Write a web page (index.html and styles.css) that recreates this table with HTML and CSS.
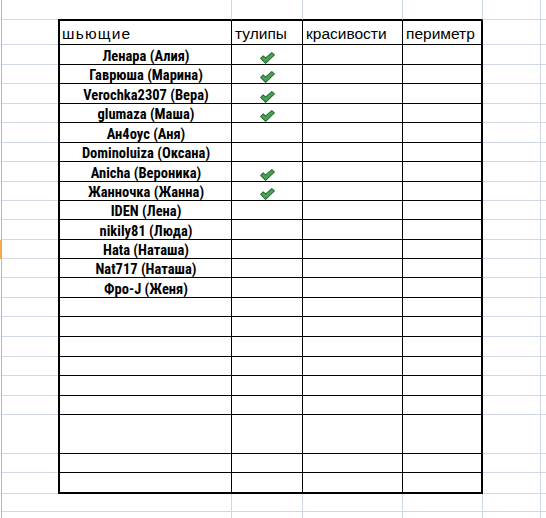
FILE: index.html
```html
<!DOCTYPE html>
<html lang="ru">
<head>
<meta charset="utf-8">
<title>шьющие</title>
<link rel="stylesheet" href="styles.css">
</head>
<body>
<div class="sheet">
  <div class="row r20 top"><div class="g"></div><div class="a"></div><div class="b"></div><div class="c"></div><div class="d"></div><div class="e"></div><div class="f"></div><div class="z"></div></div>
  <div class="row r25 t head"><div class="g"></div><div class="a"></div><div class="b">шьющие</div><div class="c">тулипы</div><div class="d">красивости</div><div class="e">периметр</div><div class="f"></div><div class="z"></div></div>

  <div class="row r20 t"><div class="g"></div><div class="a"></div><div class="b name">Ленара (Алия)</div><div class="c mark"><svg class="check" viewBox="0 0 15 12" width="15" height="12"><polygon points="0.7,6.4 3.2,3.9 5.5,6.2 11.8,0.6 14.4,2.9 5.6,11.4"/></svg></div><div class="d"></div><div class="e"></div><div class="f"></div><div class="z"></div></div>
  <div class="row r19 t"><div class="g"></div><div class="a"></div><div class="b name">Гаврюша (Марина)</div><div class="c mark"><svg class="check" viewBox="0 0 15 12" width="15" height="12"><polygon points="0.7,6.4 3.2,3.9 5.5,6.2 11.8,0.6 14.4,2.9 5.6,11.4"/></svg></div><div class="d"></div><div class="e"></div><div class="f"></div><div class="z"></div></div>
  <div class="row r20 t"><div class="g"></div><div class="a"></div><div class="b name">Verochka2307 (Вера)</div><div class="c mark"><svg class="check" viewBox="0 0 15 12" width="15" height="12"><polygon points="0.7,6.4 3.2,3.9 5.5,6.2 11.8,0.6 14.4,2.9 5.6,11.4"/></svg></div><div class="d"></div><div class="e"></div><div class="f"></div><div class="z"></div></div>
  <div class="row r19 t"><div class="g"></div><div class="a"></div><div class="b name">glumaza (Маша)</div><div class="c mark"><svg class="check" viewBox="0 0 15 12" width="15" height="12"><polygon points="0.7,6.4 3.2,3.9 5.5,6.2 11.8,0.6 14.4,2.9 5.6,11.4"/></svg></div><div class="d"></div><div class="e"></div><div class="f"></div><div class="z"></div></div>
  <div class="row r20 t"><div class="g"></div><div class="a"></div><div class="b name">Ан4оус (Аня)</div><div class="c"></div><div class="d"></div><div class="e"></div><div class="f"></div><div class="z"></div></div>
  <div class="row r19 t"><div class="g"></div><div class="a"></div><div class="b name">Dominoluiza (Оксана)</div><div class="c"></div><div class="d"></div><div class="e"></div><div class="f"></div><div class="z"></div></div>
  <div class="row r20 t"><div class="g"></div><div class="a"></div><div class="b name">Anicha (Вероника)</div><div class="c mark"><svg class="check" viewBox="0 0 15 12" width="15" height="12"><polygon points="0.7,6.4 3.2,3.9 5.5,6.2 11.8,0.6 14.4,2.9 5.6,11.4"/></svg></div><div class="d"></div><div class="e"></div><div class="f"></div><div class="z"></div></div>
  <div class="row r19 t"><div class="g"></div><div class="a"></div><div class="b name">Жанночка (Жанна)</div><div class="c mark"><svg class="check" viewBox="0 0 15 12" width="15" height="12"><polygon points="0.7,6.4 3.2,3.9 5.5,6.2 11.8,0.6 14.4,2.9 5.6,11.4"/></svg></div><div class="d"></div><div class="e"></div><div class="f"></div><div class="z"></div></div>
  <div class="row r19 t"><div class="g"></div><div class="a"></div><div class="b name">IDEN (Лена)</div><div class="c"></div><div class="d"></div><div class="e"></div><div class="f"></div><div class="z"></div></div>
  <div class="row r20 t"><div class="g"></div><div class="a"></div><div class="b name">nikily81 (Люда)</div><div class="c"></div><div class="d"></div><div class="e"></div><div class="f"></div><div class="z"></div></div>
  <div class="row r19 t sel"><div class="g"></div><div class="a"></div><div class="b name">Hata (Наташа)</div><div class="c"></div><div class="d"></div><div class="e"></div><div class="f"></div><div class="z"></div></div>
  <div class="row r19 t"><div class="g"></div><div class="a"></div><div class="b name">Nat717 (Наташа)</div><div class="c"></div><div class="d"></div><div class="e"></div><div class="f"></div><div class="z"></div></div>
  <div class="row r20 t"><div class="g"></div><div class="a"></div><div class="b name">Фро-J (Женя)</div><div class="c"></div><div class="d"></div><div class="e"></div><div class="f"></div><div class="z"></div></div>

  <div class="row r19 t"><div class="g"></div><div class="a"></div><div class="b"></div><div class="c"></div><div class="d"></div><div class="e"></div><div class="f"></div><div class="z"></div></div>
  <div class="row r20 t"><div class="g"></div><div class="a"></div><div class="b"></div><div class="c"></div><div class="d"></div><div class="e"></div><div class="f"></div><div class="z"></div></div>
  <div class="row r20 t"><div class="g"></div><div class="a"></div><div class="b"></div><div class="c"></div><div class="d"></div><div class="e"></div><div class="f"></div><div class="z"></div></div>
  <div class="row r19 t"><div class="g"></div><div class="a"></div><div class="b"></div><div class="c"></div><div class="d"></div><div class="e"></div><div class="f"></div><div class="z"></div></div>
  <div class="row r20 t"><div class="g"></div><div class="a"></div><div class="b"></div><div class="c"></div><div class="d"></div><div class="e"></div><div class="f"></div><div class="z"></div></div>
  <div class="row r19 t"><div class="g"></div><div class="a"></div><div class="b"></div><div class="c"></div><div class="d"></div><div class="e"></div><div class="f"></div><div class="z"></div></div>
  <div class="row r39 t"><div class="g"></div><div class="a"></div><div class="b"></div><div class="c"></div><div class="d"></div><div class="e"></div><div class="f"></div><div class="z"></div></div>
  <div class="row r19 t"><div class="g"></div><div class="a"></div><div class="b"></div><div class="c"></div><div class="d"></div><div class="e"></div><div class="f"></div><div class="z"></div></div>
  <div class="row r21 t last"><div class="g"></div><div class="a"></div><div class="b"></div><div class="c"></div><div class="d"></div><div class="e"></div><div class="f"></div><div class="z"></div></div>

  <div class="row r18"><div class="g"></div><div class="a"></div><div class="b"></div><div class="c"></div><div class="d"></div><div class="e"></div><div class="f"></div><div class="z"></div></div>
  <div class="row r6 end"><div class="g"></div><div class="a"></div><div class="b"></div><div class="c"></div><div class="d"></div><div class="e"></div><div class="f"></div><div class="z"></div></div>
</div>
</body>
</html>
```

FILE: styles.css
```css
html, body {
  margin: 0;
  padding: 0;
  background: #ffffff;
}

body {
  width: 546px;
  height: 518px;
  overflow: hidden;
  font-family: "Liberation Sans", Arial, sans-serif;
  color: #000;
}

.sheet {
  display: flex;
  flex-direction: column;
}

.row {
  display: grid;
  grid-template-columns: 2px 56px 174px 71px 100px 80px 58px 1fr;
}

.r6 { height: 6px; }
.r18 { height: 18px; }
.r19 { height: 19px; }
.r20 { height: 20px; }
.r21 { height: 21px; }
.r25 { height: 25px; }
.r39 { height: 39px; }

.row > div {
  box-sizing: border-box;
  border-right: 1px solid #d0d7e5;
  border-bottom: 1px solid #d0d7e5;
  min-width: 0;
  overflow: hidden;
  white-space: nowrap;
}

.row > .g {
  border-bottom: none;
  border-right-color: #a7bdd5;
}

.row > .a,
.row > .z {
  border-right: none;
}

.end > div {
  border-bottom: none;
}

/* the bordered table */
.top > .b,
.top > .c,
.top > .d,
.top > .e {
  border-bottom-color: #000;
}

.t > .b {
  border-left: 2px solid #000;
}

.t > .b,
.t > .c,
.t > .d,
.t > .e {
  border-right-color: #000;
  border-bottom-color: #000;
}

.t > .e {
  border-right-width: 2px;
}

.head > .b,
.head > .c,
.head > .d,
.head > .e {
  border-top: 1px solid #000;
  display: flex;
  align-items: flex-end;
  padding: 0 0 2px 3px;
  font-size: 15.5px;
  line-height: 17px;
}

.head > .b {
  letter-spacing: 1.2px;
  padding-left: 2px;
}

.last > .b,
.last > .c,
.last > .d,
.last > .e {
  border-bottom-width: 2px;
}

.sel > .g {
  background: #f5a94a;
  border-right-color: #f5a94a;
}

.name {
  display: flex;
  align-items: flex-end;
  justify-content: center;
  font-family: "Liberation Sans Narrow", "Roboto Condensed", "Liberation Sans", sans-serif;
  font-weight: bold;
  font-size: 14.5px;
  line-height: 15px;
  padding-left: 1px;
}

.mark {
  display: flex;
  align-items: flex-end;
  justify-content: center;
  padding-bottom: 0;
}

.check {
  display: block;
  margin-left: 1px;
}

.check polygon {
  fill: #4aa458;
  stroke: #2b7136;
  stroke-width: 1.1;
  stroke-linejoin: round;
}
```
